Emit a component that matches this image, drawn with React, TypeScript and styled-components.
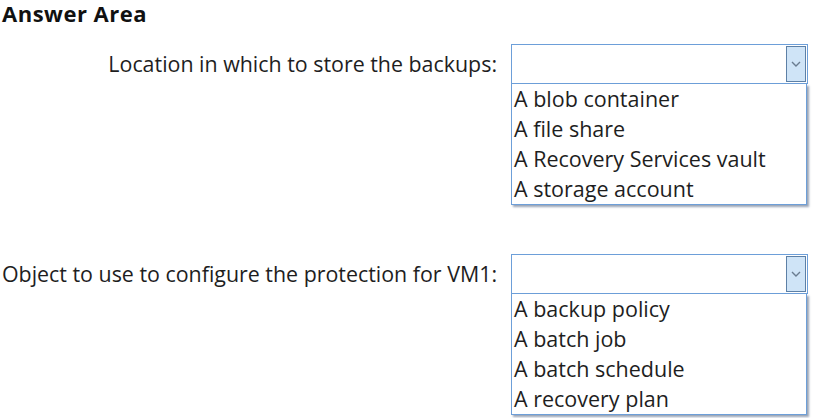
import React from "react";
import styled, { createGlobalStyle } from "styled-components";

const Global = createGlobalStyle`
  html, body { margin: 0; padding: 0; background: #ffffff; }
  body { font-family: "Open Sans", "Noto Sans", sans-serif; color: #1c1c1c; }
`;

const Page = styled.div`
  width: 813px;
  height: 418px;
  overflow: hidden;
  display: flex;
  flex-direction: column;
`;

const Title = styled.h1`
  margin: 0;
  padding: 1px 0 0 2px;
  height: 43px;
  box-sizing: content-box;
  font-size: 22px;
  font-weight: 700;
  line-height: 24px;
  letter-spacing: 0.5px;
  color: #111;
`;

const Question = styled.div<{ $gap?: number }>`
  display: grid;
  grid-template-columns: 497px 296px;
  column-gap: 14px;
  align-items: start;
  margin-bottom: ${(p) => p.$gap ?? 0}px;
`;

const Label = styled.div`
  height: 38px;
  display: flex;
  align-items: center;
  justify-content: flex-end;
  font-size: 21.4px;
  white-space: nowrap;
  color: #1e1e1e;
`;

const Dropdown = styled.div`
  width: 296px;
  display: flex;
  flex-direction: column;
`;

const Select = styled.div`
  height: 36px;
  border: 1px solid #6d9fd9;
  display: flex;
  justify-content: flex-end;
  padding: 1px 1px 1px 0;
  width: 294px;
  box-sizing: content-box;
`;

const Arrow = styled.div`
  width: 18px;
  height: 34px;
  background: #cfe4f7;
  border: 1px solid #5d80a6;
  display: flex;
  align-items: center;
  justify-content: center;
`;

const List = styled.ul`
  margin: 0;
  padding: 0 0 0 2px;
  list-style: none;
  width: 292px;
  border: 1px solid #6d9fd9;
  border-top: none;
  box-shadow: 2px 2px 2px rgba(70, 90, 120, 0.55);
`;

const Item = styled.li`
  height: 30px;
  line-height: 30px;
  font-size: 21.5px;
  color: #1e1e1e;
  white-space: nowrap;
`;

type QProps = { label: string; options: string[]; gap?: number };

const Chevron = () => (
  <svg width="10" height="6" viewBox="0 0 10 6">
    <path d="M1 1 L5 5 L9 1" fill="none" stroke="#6a7c90" strokeWidth="1.4" />
  </svg>
);

const Q = ({ label, options, gap }: QProps) => (
  <Question $gap={gap}>
    <Label>{label}</Label>
    <Dropdown>
      <Select>
        <Arrow>
          <Chevron />
        </Arrow>
      </Select>
      <List>
        {options.map((o) => (
          <Item key={o}>{o}</Item>
        ))}
      </List>
    </Dropdown>
  </Question>
);

export default function App() {
  return (
    <Page>
      <Global />
      <Title>Answer Area</Title>
      <Q
        label="Location in which to store the backups:"
        options={["A blob container", "A file share", "A Recovery Services vault", "A storage account"]}
        gap={49}
      />
      <Q
        label="Object to use to configure the protection for VM1:"
        options={["A backup policy", "A batch job", "A batch schedule", "A recovery plan"]}
      />
    </Page>
  );
}
